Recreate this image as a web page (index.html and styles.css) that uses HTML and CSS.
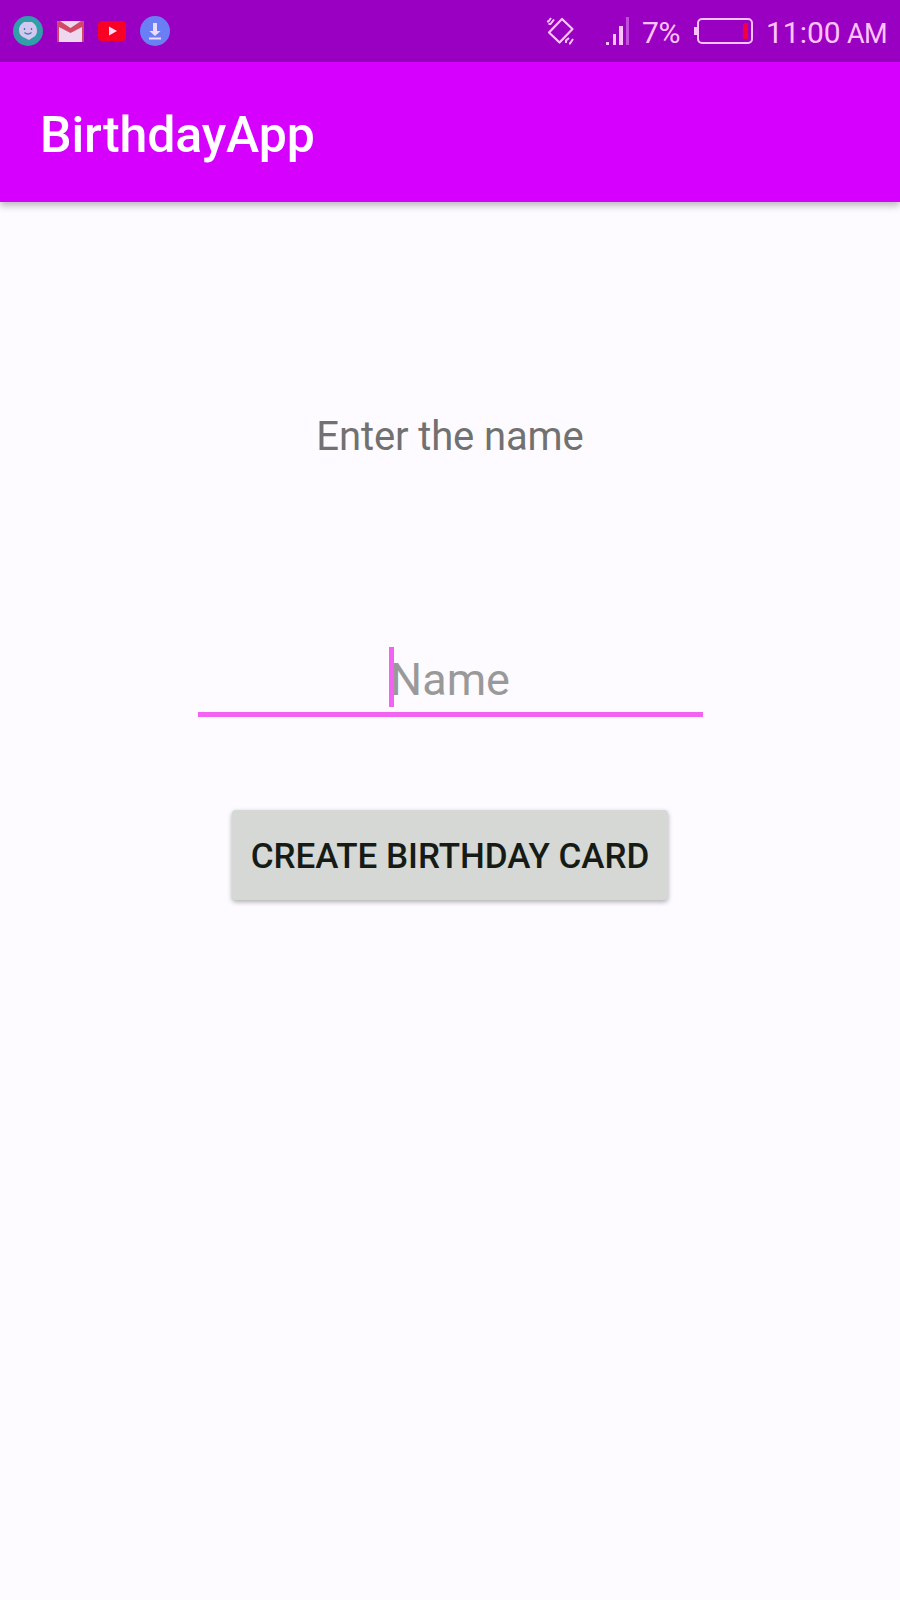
FILE: index.html
```html
<!DOCTYPE html>
<html lang="en">
<head>
<meta charset="utf-8">
<title>BirthdayApp</title>
<link rel="stylesheet" href="styles.css">
</head>
<body>
<div class="status">
  <div class="notifications">
    <svg width="30" height="30" viewBox="0 0 30 30"><circle cx="15" cy="15" r="15" fill="#309fa9"/><path d="M11 6h8q5 3 5 9 0 5-5 7l-3 2-4-2q-6-2-6-8 0-5 5-8z" fill="#d5c8ee"/><path d="M11.500 12v2M18.500 12v2M11.500 16.500q3.500 3 7 0" fill="none" stroke="#3d80aa" stroke-width="1.300"/></svg>
    <svg width="27" height="21" viewBox="0 0 27 21"><rect width="27" height="21" rx="2" fill="#eed8ee"/><path d="M0 2Q0 0 2 0h1l10.500 7L24 0h1q2 0 2 2v19h-2V6l-11.500 6L2 6v15H0z" fill="#d24967"/></svg>
    <svg width="28" height="20" viewBox="0 0 28 20"><rect width="28" height="20" rx="4" fill="#f90025"/><path d="M11 5.500l8 4.500-8 4.500z" fill="#ffdcf5"/></svg>
    <svg width="30" height="30" viewBox="0 0 30 30"><circle cx="15" cy="15" r="15" fill="#6b7ff5"/><path d="M13 7h4v8h3.500L15 20l-5.500-5H13zM9 21.500h12v2H9z" fill="#eadcff"/></svg>
  </div>
  <div class="system">
    <svg class="rotate" width="28" height="28" viewBox="0 0 28 28" fill="none" stroke="#ffc4ff" stroke-width="2.200"><path d="M15 2L25.500 12 12.500 25.500 2 15.500z" stroke-linejoin="round"/><path d="M0 4.500h1.500L4 1M1.500 7h2L7 2.500M19 26v-2.500l3-2.500M22 26.500h1l3-4.500" stroke-width="2"/></svg>
    <svg class="signal" width="24" height="28" viewBox="0 0 24 28" fill="#ffc4ff"><path d="M0 25h3v3H0zM7 17h3v11H7zM13 9h4v19h-4z"/><path d="M20 0h3v28h-3z" opacity=".4"/></svg>
    <span class="percent">7%</span>
    <svg class="battery" width="59" height="26" viewBox="0 0 59 26"><rect x="4" y="1" width="54" height="24" rx="4" fill="none" stroke="#ffc4ff" stroke-width="2"/><path d="M0 9h4v8H0z" fill="#ffc4ff"/><path d="M51 5h3v16h-3q-2 0-2-2V7q0-2 2-2z" fill="#f3003b"/></svg>
    <span class="time">11:00</span><span class="meridiem">AM</span>
  </div>
</div>
<header class="appbar"><h1 class="title">BirthdayApp</h1></header>
<main class="content">
  <label class="prompt">Enter the name</label>
  <div class="field"><span class="hint">Name<i class="caret"></i></span></div>
  <button class="create">CREATE BIRTHDAY CARD</button>
</main>
</body>
</html>
```
FILE: styles.css
```css
* { box-sizing: border-box; }
body {
  margin: 0;
  height: 1600px;
  overflow: hidden;
  background: #fdfbff;
  font-family: Roboto, sans-serif;
}
.status {
  height: 62px;
  display: flex;
  justify-content: space-between;
  background: #9900c1;
  color: #ffc4ff;
}
.notifications {
  display: flex;
  align-items: center;
  gap: 14px;
  padding-left: 13px;
}
.system {
  display: flex;
  align-items: flex-start;
  padding-right: 14px;
  line-height: 40px;
}
.rotate { margin: 17px 31px 0 0; }
.signal { margin: 17px 12px 0 0; }
.percent { width: 40px; margin: 13px 12px 0 0; font-size: 30px; letter-spacing: -0.4px; }
.battery { margin: 18px 13px 0 0; }
.time { width: 73px; margin: 13px 8px 0 0; font-size: 30px; }
.meridiem { width: 39px; margin-top: 14px; font-size: 27px; letter-spacing: -0.5px; }
.appbar {
  height: 140px;
  padding: 6px 0 0 40px;
  background: #d600ff;
  box-shadow: 0 4px 7px rgba(0, 0, 0, .25);
}
.title {
  margin: 0;
  color: #fff;
  font-size: 50px;
  line-height: 135px;
  font-weight: 500;
  letter-spacing: -0.1px;
  white-space: nowrap;
}
.content {
  display: flex;
  flex-direction: column;
  align-items: center;
  padding-top: 205px;
}
.prompt { color: #717171; font-size: 40px; line-height: 60px; letter-spacing: -0.12px; }
.field {
  width: 505px;
  height: 71px;
  margin-top: 179px;
  border-bottom: 5px solid #f263f2;
  text-align: center;
}
.hint {
  position: relative;
  display: inline-block;
  color: #9a999a;
  font-size: 45px;
  line-height: 67px;
}
.caret {
  position: absolute;
  left: -1px;
  top: 1px;
  width: 5px;
  height: 60px;
  background: #f263f2;
}
.create {
  width: 436px;
  height: 90px;
  margin-top: 93px;
  padding: 3px 0 0;
  border: 0;
  border-radius: 4px;
  background: #d5d8d4;
  color: #171b16;
  box-shadow: 0 2px 5px rgba(0, 0, 0, .32);
  font: 500 35px/87px Roboto, sans-serif;
  letter-spacing: -0.04px;
  white-space: nowrap;
}
```
